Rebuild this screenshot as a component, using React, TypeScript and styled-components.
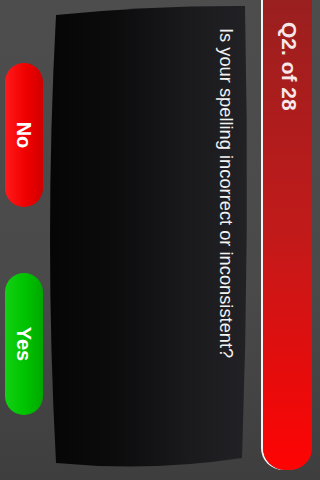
import React from "react";
import styled, { createGlobalStyle } from "styled-components";

const GlobalStyle = createGlobalStyle`
  html, body {
    margin: 0;
    padding: 0;
    width: 320px;
    height: 480px;
    overflow: hidden;
    background: #474747;
  }
`;

// the app is landscape; the whole stage is turned a quarter clockwise
const Stage = styled.div`
  width: 480px;
  height: 320px;
  transform-origin: 0 0;
  transform: translateX(320px) rotate(90deg);
  display: flex;
  flex-direction: column;
  font-family: "Liberation Sans", Arial, Helvetica, sans-serif;
  background: linear-gradient(to right, #4d4d4d 0%, #4a4a4a 60%, #3e3e3e 100%);
`;

const Header = styled.div`
  width: 470px;
  height: 49px;
  margin-top: 8px;
  box-sizing: border-box;
  padding: 12px 0 0 22px;
  border-radius: 0 22px 22px 0;
  background: linear-gradient(to right, #9a1f1f 0%, #c21a1a 50%, #ff0303 100%);
  box-shadow: 0 2px 0 #f4f4f4;
`;

const Title = styled.div`
  color: #f6e8e8;
  font-size: 21px;
  font-weight: bold;
  line-height: 1;
`;

const Panel = styled.div`
  width: 468px;
  height: 206px;
  margin: 13px 0 0 4px;
  box-sizing: border-box;
  padding: 13px 0 0 24px;
  clip-path: path("M 2 5 Q 228 0 454 8 Q 468 100 459 194 Q 235 206 11 194 Q 1.5 100 2 5 Z");
  background: linear-gradient(to bottom, #222226 0%, #1a1a1d 30%, #0c0c0d 65%, #050505 100%);
`;

const Question = styled.div`
  color: #f2f2f2;
  font-size: 18.3px;
  line-height: 1.15;
`;

const ButtonRow = styled.div`
  display: flex;
  gap: 66px;
  margin-top: 1px;
  padding-left: 63px;
`;

const Choice = styled.div<{ $tone: "red" | "green"; $w: number }>`
  width: ${(p) => p.$w}px;
  height: 38px;
  border-radius: 19px;
  display: flex;
  align-items: center;
  justify-content: center;
  color: #fff;
  font-size: 20px;
  font-weight: bold;
  background: ${(p) =>
    p.$tone === "red"
      ? "linear-gradient(to bottom, #d00000 0%, #f00000 45%, #ff1a1a 100%)"
      : "linear-gradient(to bottom, #00a800 0%, #00c200 45%, #12d012 100%)"};
`;

export default function App() {
  return (
    <>
      <GlobalStyle />
      <Stage>
        <Header>
          <Title>Q2. of 28</Title>
        </Header>
        <Panel>
          <Question>Is your spelling incorrect or inconsistent?</Question>
        </Panel>
        <ButtonRow>
          <Choice $tone="red" $w={144}>No</Choice>
          <Choice $tone="green" $w={142}>Yes</Choice>
        </ButtonRow>
      </Stage>
    </>
  );
}
